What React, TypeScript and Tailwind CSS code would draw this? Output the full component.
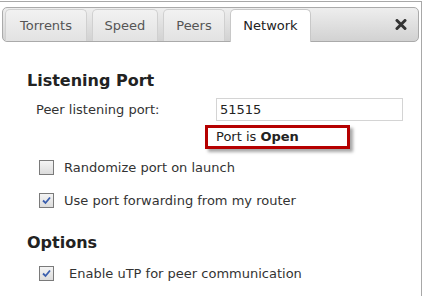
import React from 'react';

const font = { fontFamily: '"DejaVu Sans", Verdana, sans-serif' };

const Check: React.FC<{ checked?: boolean }> = ({ checked }) => (
  <span className="flex h-[15px] w-[15px] shrink-0 items-center justify-center border border-[#7a7a7a] bg-gradient-to-b from-[#f4f4f4] to-[#dcdcdc]">
    {checked && (
      <svg width="11" height="11" viewBox="0 0 11 11">
        <path d="M2 5.5 L4.5 8 L9 2.5" fill="none" stroke="#3b5fae" strokeWidth="1.8" />
      </svg>
    )}
  </span>
);

export default function App() {
  const tabs = ['Torrents', 'Speed', 'Peers', 'Network'];
  const widths = ['w-[82px]', 'w-[66px]', 'w-[62px]', 'w-[81px]'];

  return (
    <div className="h-[296px] w-[425px] overflow-hidden bg-white text-[#222]" style={font}>
      <div className="mt-px h-full w-[422px] border-t border-r border-[#a8a8a8]">
        {/* tab bar */}
        <div className="mx-[2px] mt-[5px] flex h-[35px] items-end gap-[5px] rounded-[5px] border border-[#aaa] bg-gradient-to-b from-[#eeeeee] to-[#d2d2d2] pl-[2px]">
          {tabs.map((t, i) => (
            <div
              key={t}
              className={`${widths[i]} flex items-center justify-center rounded-t-[5px] border border-b-0 text-[13px] ${
                i === 3
                  ? 'mb-[-1px] h-[33px] border-[#c8c8c8] bg-white text-[#222]'
                  : 'h-[32px] border-[#d0d0d0] bg-gradient-to-b from-[#f2f2f2] to-[#e2e2e2] text-[#555]'
              }`}
            >
              {t}
            </div>
          ))}
          <div className="ml-auto flex h-full items-center pr-[11px]">
            <svg width="12" height="11" viewBox="0 0 12 11">
              <path d="M2 1.5 L10 9.5 M10 1.5 L2 9.5" stroke="#333" strokeWidth="3" strokeLinecap="round" />
            </svg>
          </div>
        </div>

        {/* content */}
        <div className="pl-[27px] pt-[29px]">
          <h2 className="text-[16px] font-bold leading-[20px] text-[#222]">Listening Port</h2>

          <div className="mt-[7px] flex items-center pl-[9px] text-[13px] text-[#333]">
            <span className="w-[180px]">Peer listening port:</span>
            <div className="flex h-[23px] w-[187px] items-center border border-[#d4d4d4] px-[3px] text-[13px] text-[#222]">
              51515
            </div>
          </div>

          <div className="ml-[178px] mt-[4px] flex h-[24px] w-[145px] items-center border-[3px] border-[#b50000] pl-[8px] text-[13px] text-[#222] shadow-[3px_3px_3px_rgba(0,0,0,0.35)]">
            Port is&nbsp;<b>Open</b>
          </div>

          <div className="mt-[11px] flex flex-col gap-[18px] pl-[12px] text-[13px] leading-[15px] text-[#333]">
            <label className="flex items-center gap-[10px]">
              <Check />
              Randomize port on launch
            </label>
            <label className="flex items-center gap-[10px]">
              <Check checked />
              Use port forwarding from my router
            </label>
          </div>

          <h2 className="mt-[25px] text-[16px] font-bold leading-[20px] text-[#222]">Options</h2>

          <div className="mt-[13px] pl-[12px] text-[13px] leading-[15px] text-[#333]">
            <label className="flex items-center gap-[15px]">
              <Check checked />
              Enable uTP for peer communication
            </label>
          </div>
        </div>
      </div>
    </div>
  );
}
